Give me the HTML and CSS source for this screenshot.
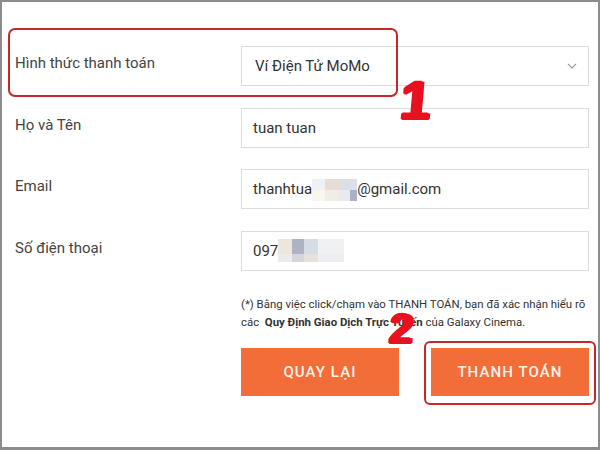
FILE: index.html
```html
<!DOCTYPE html>
<html lang="vi">
<head>
<meta charset="utf-8">
<link rel="stylesheet" href="styles.css">
</head>
<body>
<div class="frame">
  <div class="form">
    <div class="label">Hình thức thanh toán</div>
    <div class="field select">
      <span>Ví Điện Tử MoMo</span>
      <svg class="chev" width="10" height="6" viewBox="0 0 10 6"><path d="M1 1 L5 5 L9 1" fill="none" stroke="#9a9a9a" stroke-width="1.1"/></svg>
    </div>

    <div class="label">Họ và Tên</div>
    <div class="field">tuan tuan</div>

    <div class="label">Email</div>
    <div class="field">thanhtua<span class="blur blur-mail"><i class="b1"></i><i class="b2"></i><i class="b3"></i><i class="b4"></i><i class="b5"></i><i class="b6"></i></span>@gmail.com</div>

    <div class="label">Số điện thoại</div>
    <div class="field">097<span class="blur blur-phone"><i class="p1"></i><i class="p2"></i><i class="p3"></i><i class="p4"></i><i class="p5"></i><i class="p6"></i><i class="p7"></i><i class="p8"></i></span></div>
  </div>

  <div class="bottom">
    <p class="note">(*) Bằng việc click/chạm vào THANH TOÁN, bạn đã xác nhận hiểu rõ các &nbsp;<b>Quy Định Giao Dịch Trực Tuyến</b> của Galaxy Cinema.</p>
    <div class="buttons">
      <button class="btn">QUAY LẠI</button>
      <button class="btn">THANH TOÁN</button>
    </div>
  </div>

  <div class="mark mark-box1"></div>
  <div class="mark mark-box2"></div>
  <div class="mark num num1">1</div>
  <div class="mark num num2">2</div>
</div>
</body>
</html>
```
FILE: styles.css
```css
html, body {
  margin: 0;
  padding: 0;
  background: #fff;
}
.frame {
  position: relative;
  box-sizing: border-box;
  width: 600px;
  height: 450px;
  border-style: solid;
  border-color: #8c8c8c;
  border-width: 2px 2px 3px 2px;
  background: #fff;
  font-family: Roboto, "Liberation Sans", Arial, sans-serif;
  color: #333;
  overflow: hidden;
}
.form {
  display: grid;
  grid-template-columns: 239px 348px;
  grid-auto-rows: 40px;
  row-gap: 21.67px;
  padding-top: 44px;
}
.label {
  display: flex;
  align-items: center;
  padding-left: 13px;
  font-size: 15px;
  color: #444;
  margin-top: -6px;
}
.field {
  box-sizing: border-box;
  border: 1px solid #dcdcdc;
  display: flex;
  align-items: center;
  padding-left: 11px;
  font-size: 15px;
  color: #333;
}
.select {
  padding-left: 13px;
  justify-content: space-between;
  padding-right: 11px;
}
.chev {
  display: block;
}
.blur {
  display: inline-grid;
  align-self: center;
}
.blur i { display: block; }
.blur-mail {
  grid-template-columns: 13px 14px 13px 5px;
  grid-template-rows: 11px 11px;
  width: 45px;
  height: 22px;
  margin-top: 2px;
}
.blur-mail .b1 { background: #eef2f5; }
.blur-mail .b2 { background: #e7ddd5; }
.blur-mail .b3 { background: #dcdfe8; grid-column: span 2; }
.blur-mail .b4 { background: #fbf6ec; }
.blur-mail .b5 { background: #f1ece6; }
.blur-mail .b6 { background: linear-gradient(90deg, #e8eaf0 0 60%, #aab0c8 60%); grid-column: span 2; }
.blur-phone {
  grid-template-columns: 14px 12px 14px 26px;
  grid-template-rows: 15px 8px;
  width: 66px;
  height: 23px;
}
.blur-phone .p1 { background: #ede6dd; }
.blur-phone .p2 { background: #aeb3c1; }
.blur-phone .p3 { background: #d6dce4; }
.blur-phone .p4 { background: #f0f1f2; }
.blur-phone .p5 { background: #eceaee; }
.blur-phone .p6 { background: #d5d4dd; }
.blur-phone .p7 { background: #e6e1dd; }
.blur-phone .p8 { background: #eceef4; }

.bottom {
  margin-left: 239px;
  width: 352px;
  padding-top: 24px;
}
.note {
  margin: 0;
  font-size: 11.4px;
  line-height: 18px;
  color: #333;
}
.note b { font-weight: 700; }
.buttons {
  display: flex;
  gap: 32px;
  margin-top: 17px;
}
.btn {
  width: 158px;
  height: 48px;
  border: none;
  background: #f26d38;
  color: #fdf2ec;
  font-family: Roboto, "Liberation Sans", Arial, sans-serif;
  font-size: 15px;
  font-weight: 500;
  letter-spacing: 1.1px;
  padding: 0;
}
.mark { position: absolute; }
.mark-box1 {
  left: 6px;
  top: 26px;
  width: 386px;
  height: 65px;
  border: 2px solid #c8262c;
  border-radius: 7px;
}
.mark-box2 {
  left: 422px;
  top: 339px;
  width: 168px;
  height: 60px;
  border: 2px solid #c8262c;
  border-radius: 6px;
}
.num {
  font-family: "Liberation Sans", Arial, sans-serif;
  font-weight: 700;
  color: #e8111f;
  line-height: 1;
  transform: skewX(-5deg);
  text-shadow: 1px 0 0 #e8111f, 2px 0 0 #e8111f, 3px 0 0 #e8111f, -1px 0 0 #e8111f, 0 1px 0 #e8111f, 1px 1px 0 #e8111f, 2px 1px 0 #e8111f, 0 -1px 0 #e8111f;
}
.num1 {
  left: 398px;
  top: 71px;
  font-size: 54px;
}
.num2 {
  left: 387px;
  top: 306px;
  font-size: 42px;
}
```
